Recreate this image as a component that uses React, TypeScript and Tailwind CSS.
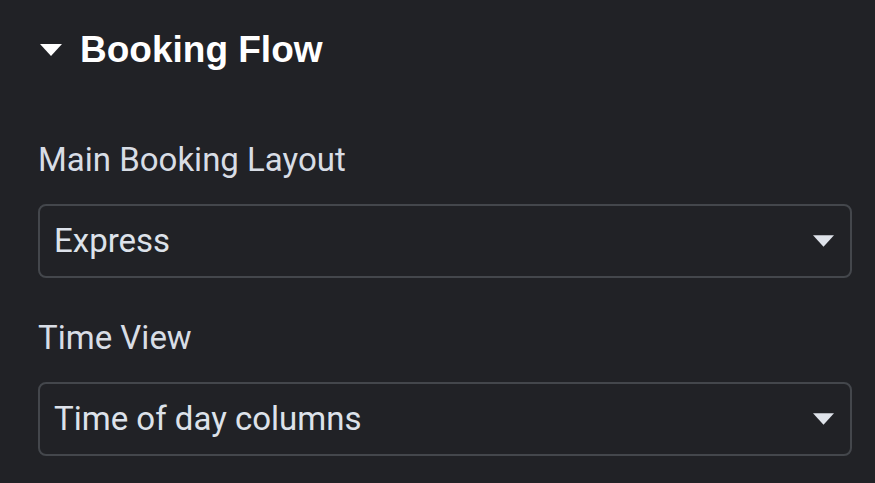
const fields = [
  { label: "Main Booking Layout", value: "Express" },
  { label: "Time View", value: "Time of day columns" },
]

const Caret = ({ className }: { className?: string }) => (
  <svg viewBox="0 0 22 12" className={className} fill="currentColor">
    <path d="M0 0 H22 L11 12 Z" />
  </svg>
)

const App = () => {
  return (
    <div className="min-h-screen w-full bg-[#212226] px-[38px] font-['Roboto',sans-serif]">
      <div className="flex h-[100px] items-center">
        <Caret className="ml-[2px] h-[12px] w-[22px] text-white" />
        <h2 className="ml-[18px] font-['Liberation_Sans',Arial,sans-serif] text-[37px] leading-[40px] font-bold text-white">
          Booking Flow
        </h2>
      </div>

      <div className="mt-[40px] flex flex-col">
        {fields.map((f) => (
          <div key={f.label} className="mb-[40px]">
            <div className="text-[33px] leading-[40px] text-[#d8dde5]">{f.label}</div>
            <div className="mt-[24px] flex h-[74px] w-[814px] items-center justify-between rounded-[8px] border-2 border-[#44474c] pl-[14px] pr-[16px]">
              <span className="text-[33px] leading-[40px] text-[#dde2ea]">{f.value}</span>
              <Caret className="h-[12px] w-[21px] text-[#dfe3ea]" />
            </div>
          </div>
        ))}
      </div>
    </div>
  )
}

export default App
